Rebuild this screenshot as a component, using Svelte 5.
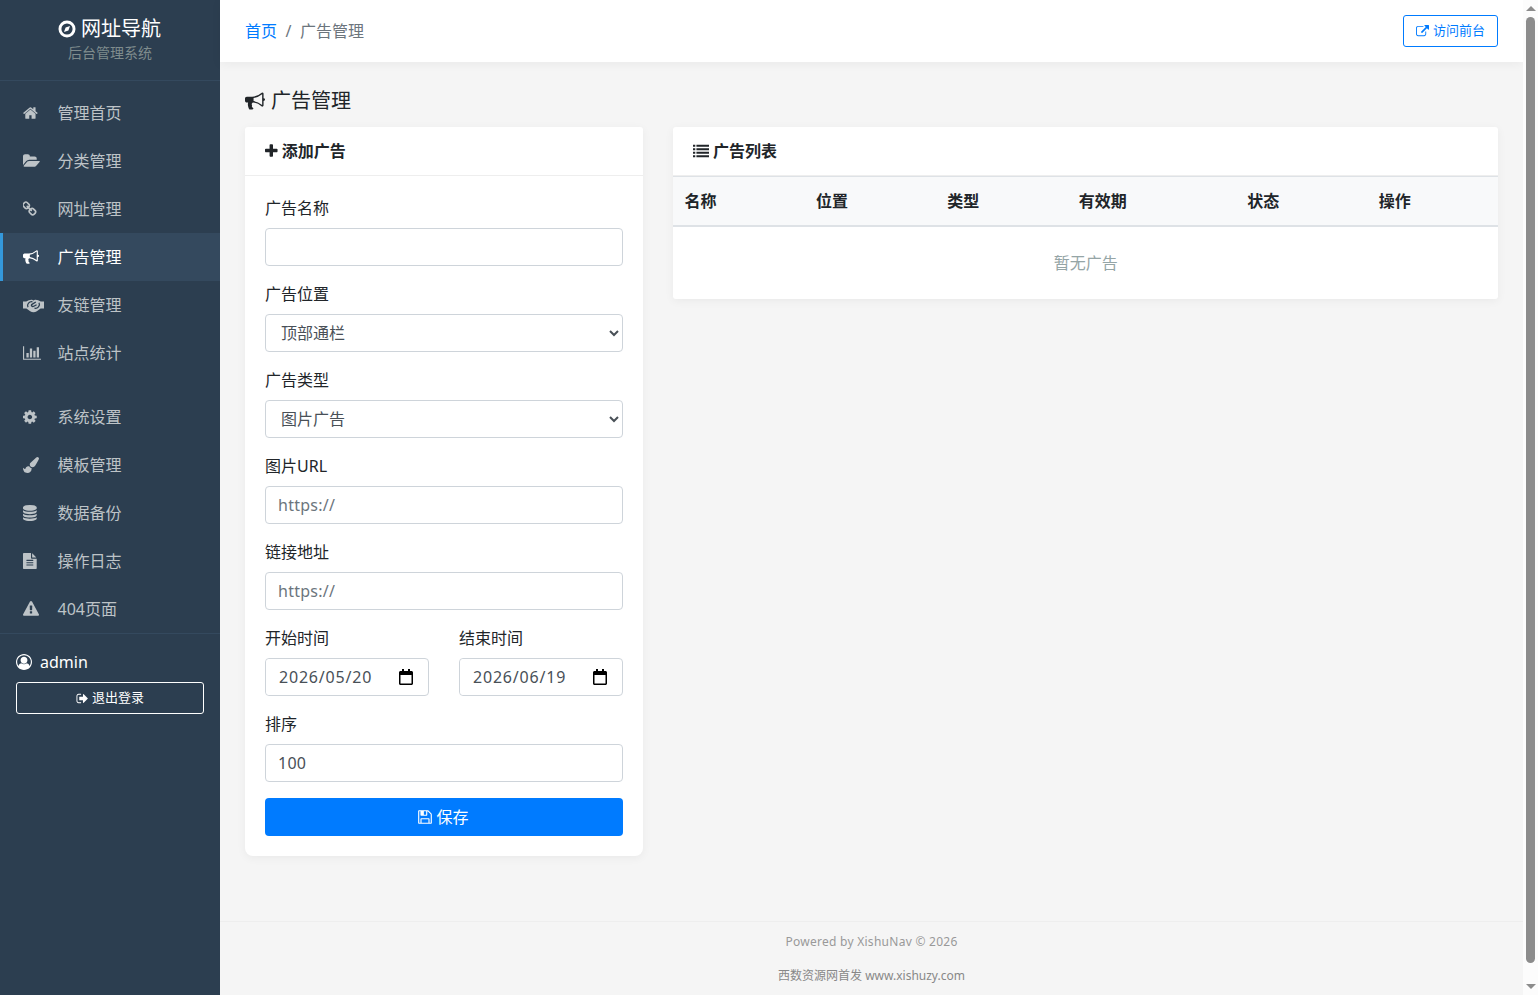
<script>
	// Font Awesome 4 style glyphs, 1792 units per em: [advance, path, left offset]
	const icons = {
		home: [1664, 'M1472 992v480q0 26-19 45t-45 19h-384v-384h-256v384h-384q-26 0-45-19t-19-45v-480q0-1 .5-3t.5-3l575-474 575 474q1 2 1 6zm223-69l-62 74q-8 9-21 11h-3q-13 0-21-7l-692-577-692 577q-12 8-24 7-13-2-21-11l-62-74q-8-10-7-23.5t11-20.5l719-599q32-26 76-26t76 26l244 204v-195q0-14 9-23t23-9h192q14 0 23 9t9 23v408l219 182q10 8 11 21.5t-7 23.5z', 64],
		folder: [1920, 'M1879 952q0 31-31 66l-336 396q-43 51-120.5 86.5t-143.5 35.5h-1088q-34 0-60.5-13t-26.5-43q0-31 31-66l336-396q43-51 120.5-86.5t143.5-35.5h1088q34 0 60.5 13t26.5 43zm-343-344v160h-832q-94 0-197 47.5t-164 119.5l-337 396-5 6q0-4-.5-12.5t-.5-12.5v-960q0-92 66-158t158-66h320q92 0 158 66t66 158v32h544q92 0 158 66t66 158z', 0],
		link: [1536, 'M1456 1216q0-40-28-68l-208-208q-28-28-68-28-42 0-72 32 3 3 19 18.5t21.5 21.5 15 19 13 25.5 3.5 27.5q0 40-28 68t-68 28q-15 0-27.5-3.5t-25.5-13-19-15-21.5-21.5-18.5-19q-33 31-33 73 0 40 28 68l206 207q27 27 68 27 40 0 68-26l147-146q28-28 28-67zm-703-705q0-40-28-68l-206-207q-28-28-68-28-39 0-68 27l-147 146q-28 28-28 67 0 40 28 68l208 208q27 27 68 27 42 0 72-31-3-3-19-18.5t-21.5-21.5-15-19-13-25.5-3.5-27.5q0-40 28-68t68-28q15 0 27.5 3.5t25.5 13 19 15 21.5 21.5 18.5 19q33-31 33-73zm895 705q0 120-85 203l-147 146q-83 83-203 83-121 0-204-85l-206-207q-83-83-83-203 0-123 88-209l-88-88q-86 88-208 88-120 0-204-84l-208-208q-84-84-84-204t85-203l147-146q83-83 203-83 121 0 204 85l206 207q83 83 83 203 0 123-88 209l88 88q86-88 208-88 120 0 204 84l208 208q84 84 84 204z', 128],
		bullhorn: [1792, 'M1664 640q53 0 90.5 37.5t37.5 90.5-37.5 90.5-90.5 37.5v384q0 52-38 90t-90 38q-417-347-812-380-58 19-91 66t-31 100.5 40 92.5q-20 33-23 65.5t6 58 33.5 55 48 50 61.5 50.5q-29 58-111.5 83t-168.5 11.5-132-55.5q-7-23-29.5-87.5t-32-94.5-23-89-15-101 3.5-98.5 22-110.5h-122q-66 0-113-47t-47-113v-192q0-66 47-113t113-47h480q435 0 896-384 52 0 90 38t38 90v384zm-128 604v-954q-394 302-768 343v270q377 42 768 341z', 0],
		chart: [2048, 'M640 896v512h-256v-512h256zm384-512v1024h-256v-1024h256zm1024 1152v128h-2048v-1536h128v1408h1920zm-640-896v768h-256v-768h256zm384-384v1152h-256v-1152h256z', 0],
		cog: [1536, 'M1152 896q0-106-75-181t-181-75-181 75-75 181 75 181 181 75 181-75 75-181zm512-109v222q0 12-8 23t-20 13l-185 28q-19 54-39 91 35 50 107 138 10 12 10 25t-9 23q-27 37-99 108t-94 71q-12 0-26-9l-138-108q-44 23-91 38-16 136-29 186-7 28-36 28h-222q-14 0-24.5-8.5t-11.5-21.5l-28-184q-49-16-90-37l-141 107q-10 9-25 9-14 0-25-11-126-114-165-168-7-10-7-23 0-12 8-23 15-21 51-66.5t54-70.5q-27-50-41-99l-183-27q-13-2-21-12.5t-8-23.5v-222q0-12 8-23t19-13l186-28q14-46 39-92-40-57-107-138-10-12-10-24 0-10 9-23 26-36 98.5-107.5t94.5-71.5q13 0 26 10l138 107q44-23 91-38 16-136 29-186 7-28 36-28h222q14 0 24.5 8.5t11.5 21.5l28 184q49 16 90 37l142-107q9-9 24-9 13 0 25 10 129 119 165 170 7 8 7 22 0 12-8 23-15 21-51 66.5t-54 70.5q26 50 41 98l183 28q13 2 21 12.5t8 23.5z', 128],
		brush: [1792, 'M1615 0q70 0 122.5 46.5t52.5 116.5q0 63-45 151-332 629-465 752-97 91-218 91-126 0-216.5-92.5t-90.5-219.5q0-128 92-212l638-579q59-54 130-54zm-909 1034q39 76 106.5 130t150.5 76l1 71q4 213-129.5 347t-348.5 134q-123 0-218-46.5t-152.5-127.5-86.5-183-29-220q7 5 41 30t62 44.5 59 36.5 46 17q41 0 55-37 25-66 57.5-112.5t69.5-76 88-47.5 103-25.5 125-10.5z', 0],
		database: [1536, 'M768 768q237 0 443-43t325-127v170q0 69-103 128t-280 93.5-385 34.5-385-34.5-280-93.5-103-128v-170q119 84 325 127t443 43zm0 768q237 0 443-43t325-127v170q0 69-103 128t-280 93.5-385 34.5-385-34.5-280-93.5-103-128v-170q119 84 325 127t443 43zm0-384q237 0 443-43t325-127v170q0 69-103 128t-280 93.5-385 34.5-385-34.5-280-93.5-103-128v-170q119 84 325 127t443 43zm0-1152q208 0 385 34.5t280 93.5 103 128v128q0 69-103 128t-280 93.5-385 34.5-385-34.5-280-93.5-103-128v-128q0-69 103-128t280-93.5 385-34.5z', 0],
		file: [1536, 'M1596 476q14 14 28 36h-472v-472q22 14 36 28zm-476 164h544v1056q0 40-28 68t-68 28h-1344q-40 0-68-28t-28-68v-1600q0-40 28-68t68-28h800v544q0 40 28 68t68 28zm160 736v-64q0-14-9-23t-23-9h-704q-14 0-23 9t-9 23v64q0 14 9 23t23 9h704q14 0 23-9t9-23zm0-256v-64q0-14-9-23t-23-9h-704q-14 0-23 9t-9 23v64q0 14 9 23t23 9h704q14 0 23-9t9-23zm0-256v-64q0-14-9-23t-23-9h-704q-14 0-23 9t-9 23v64q0 14 9 23t23 9h704q14 0 23-9t9-23z', 128],
		warning: [1792, 'M1024 1375v-190q0-14-9.5-23.5t-22.5-9.5h-192q-13 0-22.5 9.5t-9.5 23.5v190q0 14 9.5 23.5t22.5 9.5h192q13 0 22.5-9.5t9.5-23.5zm-2-374l18-459q0-12-10-19-13-11-24-11h-220q-11 0-24 11-10 7-10 21l17 457q0 10 10 16.5t24 6.5h185q14 0 23.5-6.5t10.5-16.5zm-14-934l768 1408q35 63-2 126-17 29-46.5 46t-63.5 17h-1536q-34 0-63.5-17t-46.5-46q-37-63-2-126l768-1408q17-31 47-49t65-18 65 18 47 49z', 0],
		user: [1792, 'M896 0q182 0 348 71t286 191 191 286 71 348q0 181-70.5 347t-190.5 286-286 191.5-349 71.5-349-71-285.5-191.5-190.5-286-71-347.5 71-348 191-286 286-191 348-71zm619 1351q149-205 149-455 0-156-61-298t-164-245-245-164-298-61-298 61-245 164-164 245-61 298q0 250 149 455 66-327 306-327 131 128 313 128t313-128q240 0 306 327zm-235-647q0-159-112.5-271.5t-271.5-112.5-271.5 112.5-112.5 271.5 112.5 271.5 271.5 112.5 271.5-112.5 112.5-271.5z', 0],
		signout: [1664, 'M704 1440q0 4 1 20t.5 26.5-3 23.5-10 19.5-20.5 6.5h-320q-119 0-203.5-84.5t-84.5-203.5v-704q0-119 84.5-203.5t203.5-84.5h320q13 0 22.5 9.5t9.5 22.5q0 4 1 20t.5 26.5-3 23.5-10 19.5-20.5 6.5h-320q-66 0-113 47t-47 113v704q0 66 47 113t113 47h312l11.5 1 11.5 3 8 5.5 7 9 2 13.5zm928-544q0 26-19 45l-544 544q-19 19-45 19t-45-19-19-45v-288h-448q-26 0-45-19t-19-45v-384q0-26 19-45t45-19h448v-288q0-26 19-45t45-19 45 19l544 544q19 19 19 45z', 0],
		external: [1792, 'M1408 928v320q0 119-84.5 203.5t-203.5 84.5h-832q-119 0-203.5-84.5t-84.5-203.5v-832q0-119 84.5-203.5t203.5-84.5h704q14 0 23 9t9 23v64q0 14-9 23t-23 9h-704q-66 0-113 47t-47 113v832q0 66 47 113t113 47h832q66 0 113-47t47-113v-320q0-14 9-23t23-9h64q14 0 23 9t9 23zm384-864v512q0 26-19 45t-45 19-45-19l-176-176-652 652q-10 10-23 10t-23-10l-114-114q-10-10-10-23t10-23l652-652-176-176q-19-19-19-45t19-45 45-19h512q26 0 45 19t19 45z', 0],
		plus: [1440, 'M1408 736v192q0 40-28 68t-68 28h-416v416q0 40-28 68t-68 28h-192q-40 0-68-28t-28-68v-416h-416q-40 0-68-28t-28-68v-192q0-40 28-68t68-28h416v-416q0-40 28-68t68-28h192q40 0 68 28t28 68v416h416q40 0 68 28t28 68z', 0],
		list: [1792, 'M0 208h256v224H0zM384 208h1408v224H384zM0 592h256v224H0zM384 592h1408v224H384zM0 976h256v224H0zM384 976h1408v224H384zM0 1360h256v224H0zM384 1360h1408v224H384z', 0],
		save: [1792, 'M512 1536h768v-384h-768v384zm896 0h128v-896q0-14-10-38.5t-20-34.5l-281-281q-10-10-34-20t-39-10v416q0 40-28 68t-68 28h-576q-40 0-68-28t-28-68v-416h-128v1280h128v-416q0-40 28-68t68-28h832q40 0 68 28t28 68v416zm-384-928v-320q0-13-9.5-22.5t-22.5-9.5h-192q-13 0-22.5 9.5t-9.5 22.5v320q0 13 9.5 22.5t22.5 9.5h192q13 0 22.5-9.5t9.5-22.5zm640 32v928q0 40-28 68t-68 28h-1344q-40 0-68-28t-28-68v-1344q0-40 28-68t68-28h928q40 0 88 20t76 48l280 280q28 28 48 76t20 88z', 0]
	};

	const menuTop = [
		{ icon: 'home', label: '管理首页' },
		{ icon: 'folder', label: '分类管理' },
		{ icon: 'link', label: '网址管理' },
		{ icon: 'bullhorn', label: '广告管理', active: true },
		{ icon: 'handshake', label: '友链管理' },
		{ icon: 'chart', label: '站点统计' }
	];
	const menuBottom = [
		{ icon: 'cog', label: '系统设置' },
		{ icon: 'brush', label: '模板管理' },
		{ icon: 'database', label: '数据备份' },
		{ icon: 'file', label: '操作日志' },
		{ icon: 'warning', label: '404页面' }
	];
	const columns = ['名称', '位置', '类型', '有效期', '状态', '操作'];
</script>

{#snippet glyph(name, size = 16)}
	{#if name === 'handshake'}
		<svg class="glyph" width="21" height="16" viewBox="0 0 21 16" aria-hidden="true">
			<path d="M0 4.5h3.2l2.6-1.2C7 2.8 8 2.6 9 2.8l1.5.6 1.5-.6c1-.2 2 0 3.2.5l2.6 1.2H21v7h-3.4l-3.8 2.7c-2 1.3-4.6 1.3-6.6 0L3.4 11.5H0z" fill="currentColor" />
			<path d="M5 10.2c-1.6-3 1.5-6 4.5-5.4M16 5.8c1.6 3-1.5 6-4.5 5.4M12.8 5L9 7.4c-1.5 1 .2 2.7 1.8 1.8l2.8-1.5" fill="none" stroke="#2c3e50" stroke-width="1.3" />
		</svg>
	{:else}
		<svg class="glyph" width={(icons[name][0] * size) / 1792} height={size} viewBox="{icons[name][2]} 0 {icons[name][0]} 1792" aria-hidden="true">
			<path d={icons[name][1]} fill="currentColor" />
		</svg>
	{/if}
{/snippet}

{#snippet menuItem(item)}
	<a class="menu-item" class:active={item.active} href="#top">
		<span class="menu-icon">{@render glyph(item.icon)}</span>
		<span>{item.label}</span>
	</a>
{/snippet}

{#snippet calendar()}
	<svg class="cal" width="14" height="16" viewBox="0 0 14 16" aria-hidden="true">
		<path d="M3 0h2v2h4V0h2v2h1.5C13.3 2 14 2.7 14 3.5v11c0 .8-.7 1.5-1.5 1.5h-11C.7 16 0 15.3 0 14.5v-11C0 2.7.7 2 1.5 2H3zM1.5 6v8.5h11V6z" fill="#000" />
	</svg>
{/snippet}

<div class="layout">
	<aside class="sidebar">
		<div class="brand">
			<div class="brand-title">
				<svg width="18" height="18" viewBox="0 0 18 18" aria-hidden="true">
					<path fill-rule="evenodd" d="M9 .5a8.5 8.5 0 1 1 0 17 8.5 8.5 0 0 1 0-17zM9 3.4a5.6 5.6 0 1 0 0 11.2A5.6 5.6 0 0 0 9 3.4z" fill="#fff" />
					<path d="M12 6L10.4 10.4 6 12 7.6 7.6z" fill="#fff" />
				</svg>
				<span>网址导航</span>
			</div>
			<div class="brand-sub">后台管理系统</div>
		</div>
		<nav class="menu">
			<div class="menu-group">
				{#each menuTop as item}
					{@render menuItem(item)}
				{/each}
			</div>
			<div class="menu-group">
				{#each menuBottom as item}
					{@render menuItem(item)}
				{/each}
			</div>
		</nav>
		<div class="account">
			<div class="account-name">{@render glyph('user')}<span>admin</span></div>
			<button class="logout">{@render glyph('signout', 13)}<span>退出登录</span></button>
		</div>
	</aside>

	<main class="main">
		<header class="topbar">
			<div class="crumbs">
				<a href="#top">首页</a>
				<span class="sep">/</span>
				<span class="here">广告管理</span>
			</div>
			<a class="visit" href="#top">{@render glyph('external', 13)}<span>访问前台</span></a>
		</header>

		<section class="content">
			<h1 class="page-title">{@render glyph('bullhorn', 20)}<span>广告管理</span></h1>
			<div class="columns">
				<div class="card form-card">
					<div class="card-head">{@render glyph('plus')}<span>添加广告</span></div>
					<form class="card-body">
						<div class="field">
							<label for="ad-name">广告名称</label>
							<input id="ad-name" type="text" />
						</div>
						<div class="field">
							<label for="ad-pos">广告位置</label>
							<select id="ad-pos">
								<option>顶部通栏</option>
							</select>
						</div>
						<div class="field">
							<label for="ad-type">广告类型</label>
							<select id="ad-type">
								<option>图片广告</option>
							</select>
						</div>
						<div class="field">
							<label for="ad-img">图片URL</label>
							<input id="ad-img" type="text" placeholder="https://" />
						</div>
						<div class="field">
							<label for="ad-url">链接地址</label>
							<input id="ad-url" type="text" placeholder="https://" />
						</div>
						<div class="field-row">
							<div class="field">
								<label for="ad-start">开始时间</label>
								<div class="date">
									<input id="ad-start" type="text" value="2026/05/20" />
									{@render calendar()}
								</div>
							</div>
							<div class="field">
								<label for="ad-end">结束时间</label>
								<div class="date">
									<input id="ad-end" type="text" value="2026/06/19" />
									{@render calendar()}
								</div>
							</div>
						</div>
						<div class="field">
							<label for="ad-sort">排序</label>
							<input id="ad-sort" type="text" value="100" />
						</div>
						<button type="button" class="save">{@render glyph('save')}<span>保存</span></button>
					</form>
				</div>

				<div class="card">
					<div class="card-head">{@render glyph('list')}<span>广告列表</span></div>
					<table>
						<thead>
							<tr>
								{#each columns as col}
									<th>{col}</th>
								{/each}
							</tr>
						</thead>
						<tbody>
							<tr>
								<td colspan="6" class="empty">暂无广告</td>
							</tr>
						</tbody>
					</table>
				</div>
			</div>
		</section>

		<footer class="footer">
			<p class="powered">Powered by XishuNav © 2026</p>
			<p>西数资源网首发 www.xishuzy.com</p>
		</footer>
	</main>

	<div class="scrollbar" aria-hidden="true">
		<span class="arrow up"></span>
		<span class="thumb"></span>
		<span class="arrow down"></span>
	</div>
</div>

<style>
	:global(body) {
		margin: 0;
		overflow: hidden;
		background: #f5f5f5;
		font-family: 'Noto Sans', 'Noto Sans CJK SC', sans-serif;
		font-size: 16px;
		line-height: 1.5;
		color: #212529;
	}

	a {
		text-decoration: none;
	}

	.glyph {
		display: block;
		flex: none;
	}

	.layout {
		display: grid;
		grid-template-columns: 220px 1fr 15px;
		height: 100vh;
	}

	/* sidebar */
	.sidebar {
		background: #2c3e50;
		color: #fff;
		display: flex;
		flex-direction: column;
	}

	.brand {
		height: 81px;
		box-sizing: border-box;
		padding-top: 15px;
		border-bottom: 1px solid #34495e;
		text-align: center;
	}

	.brand-title {
		display: flex;
		align-items: center;
		justify-content: center;
		gap: 5px;
		padding-right: 1px;
		font-size: 20px;
		line-height: 28px;
	}

	.brand-sub {
		font-size: 14px;
		line-height: 20px;
		color: #7f8c8d;
	}

	.menu {
		padding-top: 8px;
		border-bottom: 1px solid #34495e;
	}

	.menu-group + .menu-group {
		margin-top: 16px;
	}

	.menu-item {
		display: flex;
		align-items: center;
		height: 48px;
		box-sizing: border-box;
		padding-left: 20px;
		border-left: 3px solid transparent;
		color: #bdc3c7;
	}

	.menu-item.active {
		background: #34495e;
		border-left-color: #3498db;
		color: #fff;
	}

	.menu-icon {
		width: 34.5px;
		flex: none;
	}

	.account {
		padding: 16px;
	}

	.account-name {
		display: flex;
		align-items: center;
		gap: 8px;
		line-height: 24px;
		margin-bottom: 8px;
	}

	.logout {
		display: flex;
		align-items: center;
		justify-content: center;
		gap: 4px;
		width: 100%;
		height: 32px;
		background: transparent;
		border: 1px solid #fff;
		border-radius: 3px;
		color: #fff;
		font: inherit;
		font-size: 13px;
	}

	/* main column */
	.main {
		display: flex;
		flex-direction: column;
		min-width: 0;
	}

	.topbar {
		display: flex;
		align-items: center;
		justify-content: space-between;
		height: 62px;
		padding: 0 25px;
		background: #fff;
		box-shadow: 0 2px 10px rgba(0, 0, 0, 0.05);
	}

	.crumbs {
		display: flex;
		gap: 8px;
	}

	.crumbs a {
		color: #007bff;
	}

	.crumbs .sep,
	.crumbs .here {
		color: #6c757d;
	}

	.crumbs .sep {
		width: 7px;
		text-align: center;
	}

	.visit {
		display: flex;
		align-items: center;
		gap: 4px;
		height: 32px;
		box-sizing: border-box;
		padding: 0 12px;
		border: 1px solid #007bff;
		border-radius: 3px;
		color: #007bff;
		font-size: 13px;
	}

	.content {
		flex: 1;
		padding: 25px;
	}

	.page-title {
		display: flex;
		align-items: center;
		gap: 6px;
		margin: 0 0 12px;
		font-size: 20px;
		font-weight: 400;
		line-height: 28px;
	}

	.columns {
		display: grid;
		grid-template-columns: 398px 1fr;
		gap: 30px;
		align-items: start;
	}

	.card {
		background: #fff;
		border-radius: 3px;
		box-shadow: 0 2px 10px rgba(0, 0, 0, 0.05);
		overflow: hidden;
	}

	.form-card {
		border-radius: 3px 3px 8px 8px;
	}

	.card-head {
		display: flex;
		align-items: center;
		gap: 4px;
		padding: 12px 20px;
		border-bottom: 1px solid #eee;
		font-weight: 700;
		line-height: 24px;
	}

	.card-body {
		padding: 20px;
	}

	.field {
		margin-bottom: 16px;
	}

	.field label {
		display: block;
		margin-bottom: 8px;
		line-height: 24px;
	}

	.field-row {
		display: grid;
		grid-template-columns: 1fr 1fr;
		gap: 30px;
	}

	input,
	select {
		display: block;
		width: 100%;
		height: 38px;
		box-sizing: border-box;
		padding: 6px 12px;
		background: #fff;
		border: 1px solid #ced4da;
		border-radius: 4px;
		color: #495057;
		font: inherit;
	}

	input {
		letter-spacing: 0.25px;
	}

	select {
		padding-left: 11px;
	}

	input::placeholder {
		color: #6c757d;
		opacity: 1;
	}

	.date {
		display: flex;
		align-items: center;
		height: 38px;
		box-sizing: border-box;
		padding-right: 15px;
		border: 1px solid #ced4da;
		border-radius: 4px;
	}

	.date input {
		flex: 1;
		min-width: 0;
		height: 36px;
		padding: 0 0 0 13px;
		border: 0;
		outline: 0;
		letter-spacing: 0.8px;
	}

	.cal {
		flex: none;
	}

	.save {
		display: flex;
		align-items: center;
		justify-content: center;
		gap: 3px;
		padding: 0 2px 0 0;
		width: 100%;
		height: 38px;
		background: #007bff;
		border: 0;
		border-radius: 4px;
		color: #fff;
		font: inherit;
	}

	table {
		width: 100%;
		border-collapse: collapse;
		table-layout: fixed;
	}

	th {
		width: 119.9px;
		height: 48px;
		box-sizing: content-box;
		padding: 0 0 0 11.5px;
		background: #f8f9fa;
		border-top: 1px solid #dee2e6;
		border-bottom: 2px solid #dee2e6;
		font-weight: 700;
		text-align: left;
	}

	th:nth-child(4) {
		width: 157.1px;
	}

	.empty {
		padding: 24px 12px;
		text-align: center;
		color: #95a5a6;
	}

	.footer {
		padding: 10px 0;
		border-top: 1px solid #eee;
		text-align: center;
		font-size: 12px;
		line-height: 19px;
		color: #999;
	}

	.footer p {
		margin: 0;
	}

	.footer p + p {
		margin-top: 15px;
		color: #888;
	}

	.powered {
		letter-spacing: 0.27px;
	}

	/* page scrollbar as the browser drew it */
	.scrollbar {
		display: flex;
		flex-direction: column;
		align-items: center;
		background: #fcfcfc;
	}

	.arrow {
		width: 0;
		height: 0;
		flex: none;
		border-left: 5px solid transparent;
		border-right: 5px solid transparent;
	}

	.arrow.up {
		margin: 6px 0;
		border-bottom: 5px solid #8c8c8c;
	}

	.arrow.down {
		margin: 21px 0 6px;
		border-top: 5px solid #8c8c8c;
	}

	.thumb {
		flex: 1;
		width: 9px;
		border-radius: 5px;
		background: #8c8c8c;
	}
</style>
